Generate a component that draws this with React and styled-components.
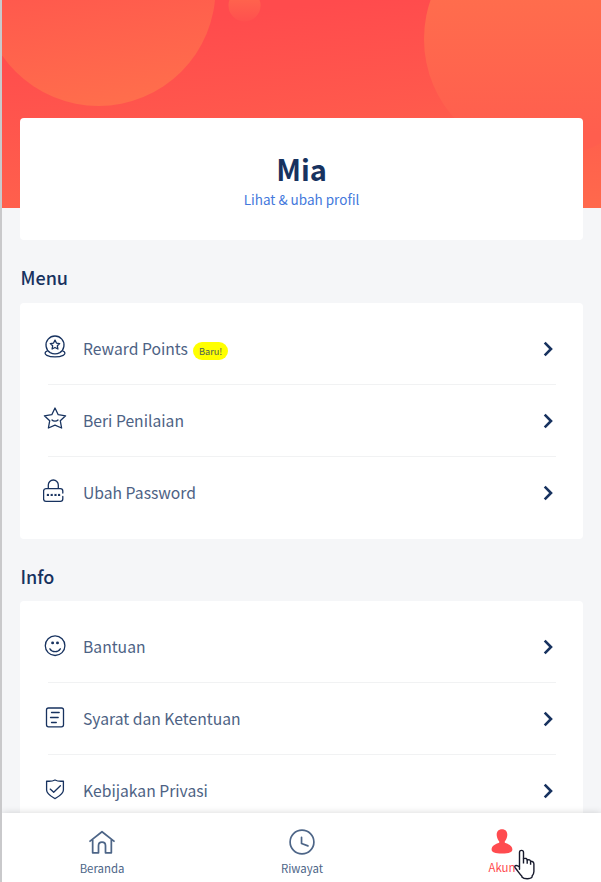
import React from "react";
import styled, { createGlobalStyle } from "styled-components";

const GlobalStyle = createGlobalStyle`
  *, *::before, *::after { box-sizing: border-box; }
  body {
    margin: 0;
    background: #c9c9cb;
    font-family: "Source Sans Pro", "Noto Sans CJK SC", sans-serif;
    color: #17325f;
    overflow: hidden;
  }
`;

const Screen = styled.div`
  display: flex;
  flex-direction: column;
  height: 882px;
  margin-left: 2px;
  background: #f5f6f8;
  overflow: hidden;
`;

const Content = styled.main`
  flex: 1;
  min-height: 0;
  overflow: hidden;
`;

const Banner = styled.header`
  height: 208px;
  background: linear-gradient(173deg, #ff4b4d 15%, #ff694c 100%);

  svg { display: block; }
`;

const Card = styled.section`
  margin: 0 18px;
  background: #fff;
  border-radius: 4px;
`;

const ProfileCard = styled(Card)`
  position: relative;
  display: flex;
  flex-direction: column;
  align-items: center;
  height: 122px;
  margin-top: -90px;
  padding-top: 30px;
`;

const Name = styled.h1`
  margin: 0 0 1px;
  font-size: 29px;
  line-height: 40px;
  font-weight: 700;
`;

const ProfileLink = styled.a`
  font-size: 13.5px;
  line-height: 20px;
  color: #4479dc;
`;

const SectionTitle = styled.h2`
  margin: 24px 0 ${(p) => p.$bottom}px 18.5px;
  font-size: 18px;
  line-height: 26px;
  font-weight: 500;
`;

const MenuList = styled(Card)`
  padding: 10px 27px 10px 28px;
`;

const MenuRow = styled.div`
  display: flex;
  align-items: center;
  height: 72px;
  border-bottom: 1px solid ${(p) => (p.$last ? "transparent" : "#f1f2f3")};

  > svg:first-child {
    flex: none;
    margin: -4px 16px 0 -5px;
  }
  > svg:last-child {
    flex: none;
    margin-left: auto;
    margin-right: 3px;
  }
`;

const Label = styled.span`
  font-size: 15.7px;
  line-height: 24px;
  color: #4d6284;
`;

const Badge = styled.span`
  height: 18px;
  margin: 4px 0 0 5px;
  padding: 0 6px;
  border-radius: 9px;
  background: #ffff00;
  color: #4d6254;
  font-size: 9.2px;
  line-height: 18px;
`;

const NavBar = styled.nav`
  position: relative;
  display: grid;
  grid-template-columns: repeat(3, 200px);
  flex: none;
  height: 69px;
  background: #fff;
  box-shadow: 0 0 7px rgba(0, 0, 0, 0.16);
`;

const NavItem = styled.a`
  display: flex;
  flex-direction: column;
  align-items: center;
  padding-top: 15px;
  color: ${(p) => (p.$active ? "#ff4b4f" : "#4d6587")};
  font-size: 11.4px;
  line-height: 18px;

  svg { display: block; flex: none; margin-bottom: ${(p) => (p.$active ? 2 : 3)}px; }
`;

const Pointer = styled.svg`
  position: absolute;
  left: 510px;
  top: 36px;
`;

function BannerArt() {
  return (
    <svg width="599" height="208" viewBox="2 0 599 208">
      <defs>
        <linearGradient id="bubbleLeft" x1="0.45" y1="0.45" x2="0.55" y2="1">
          <stop offset="0" stopColor="#ff584d" />
          <stop offset="1" stopColor="#ff6e4c" />
        </linearGradient>
        <linearGradient id="bubbleSmall" x1="0" y1="0" x2="0" y2="1">
          <stop offset="0.2" stopColor="#ff664d" />
          <stop offset="1" stopColor="#ff504e" />
        </linearGradient>
        <linearGradient id="bubbleRight" x1="0.5" y1="0.32" x2="0.5" y2="0.9">
          <stop offset="0" stopColor="#ff6d4d" />
          <stop offset="1" stopColor="#ff5e4e" />
        </linearGradient>
      </defs>
      <circle cx="98.5" cy="-11" r="117" fill="url(#bubbleLeft)" />
      <circle cx="244.5" cy="5.5" r="16" fill="url(#bubbleSmall)" />
      <circle cx="543" cy="39" r="119" fill="url(#bubbleRight)" />
    </svg>
  );
}

function LineIcon({ children, width = 1.3, size = 24 }) {
  return (
    <svg
      width={size}
      height={size}
      viewBox="0 0 24 24"
      fill="none"
      stroke="currentColor"
      strokeWidth={width}
      strokeLinecap="round"
      strokeLinejoin="round"
    >
      {children}
    </svg>
  );
}

const RewardIcon = () => (
  <LineIcon>
    <path d="M7.2 17.6a9 9 0 1 1 9.6 0c-2.7 1.4-6.9 1.4-9.6 0Z" />
    <path d="m12 5.1 1.45 2.95 3.25.47-2.35 2.3.55 3.23-2.9-1.53-2.9 1.53.55-3.23-2.35-2.3 3.25-.47Z" />
    <path d="M4.3 15.9c-3 1.2-2.8 3.3-.5 4.4 4.2 2.2 12.2 2.2 16.4 0 2.3-1.1 2.5-3.2-.5-4.4" />
  </LineIcon>
);

const StarIcon = () => (
  <LineIcon>
    <path d="m12 1 3.2 6.7 7.4 1.1-5.3 5 1.3 7.2-6.6-2.8L5.4 21l1.3-7.2-5.3-5 7.4-1.1Z" />
    <path d="M9 13c1.4 1.6 4.6 1.6 6 0" />
  </LineIcon>
);

const LockIcon = () => (
  <LineIcon>
    <path d="M5.3 9.4V6a5 5 0 0 1 10 0v3.4M19.8 14v-2a2.4 2.4 0 0 0-2.4-2.4H2.9A2.4 2.4 0 0 0 .6 12v8A2.4 2.4 0 0 0 3 22.4h14.4a2.4 2.4 0 0 0 2.4-2.4v-2.5" />
    <path strokeWidth="1.1" d="m4.3 15.3 1.2 1.2m0-1.2-1.2 1.2m3.8-1.2 1.2 1.2m0-1.2-1.2 1.2m3.8-1.2 1.2 1.2m0-1.2-1.2 1.2m3.6-1.2 1.2 1.2m0-1.2-1.2 1.2" />
  </LineIcon>
);

const SmileIcon = () => (
  <LineIcon>
    <circle cx="12.1" cy="12.7" r="9.8" />
    <path d="M6.9 15.8c2.3 3.8 8.1 3.8 10.4 0" />
    <ellipse cx="9.6" cy="9.9" rx=".8" ry=".7" fill="currentColor" />
    <ellipse cx="14.5" cy="9.9" rx=".8" ry=".7" fill="currentColor" />
  </LineIcon>
);

const DocumentIcon = () => (
  <LineIcon>
    <rect x="3.5" y="3" width="17" height="18.8" rx="2" />
    <path d="M8.5 7.5h7.7M7.5 12.5h7.7M8.5 17.5h4.8" />
  </LineIcon>
);

const ShieldIcon = () => (
  <LineIcon>
    <path d="M12 3c2 1 5 1.5 8.4 1.1v9c0 4.1-4.6 6.3-8.4 8.5-3.8-2.2-8.4-4.4-8.4-8.5v-9C7 4.5 10 4 12 3Z" />
    <path d="m7.2 12.1 3.5 3.2 6.7-6.6" />
  </LineIcon>
);

const Chevron = () => (
  <svg width="10" height="16" viewBox="0 0 10 16" fill="none" stroke="currentColor" strokeWidth="2.6">
    <path d="m1.7 1.7 6.3 6.3-6.3 6.3" />
  </svg>
);

const HomeIcon = () => (
  <LineIcon size={28} width={1.5}>
    <path strokeLinecap="square" d="M1.8 11.2 12 3.2l10.2 8M4 10v11.3h5v-6.1c0-4 6-4 6 0v6.1h5V10" />
  </LineIcon>
);

const ClockIcon = () => (
  <LineIcon size={28} width={1.45}>
    <circle cx="12" cy="12" r="10.2" />
    <path d="M11.6 8v5.3l5.5 2" />
  </LineIcon>
);

const PersonIcon = () => (
  <svg width="28" height="28" viewBox="0 0 28 28" fill="currentColor">
    <path d="M14 1.2c-4 0-6 3-5.1 7.3.4 2.2 1.3 3.8 2.3 4.8v1.5c-3.7 1.2-7.6 3.2-7.6 6.7 0 2.5 3.3 4.1 10.4 4.1s10.4-1.6 10.4-4.1c0-3.5-3.9-5.5-7.6-6.7v-1.5c1-1 1.9-2.6 2.3-4.8C20 4.2 18 1.2 14 1.2Z" />
  </svg>
);

const HandPointer = () => (
  <Pointer width="24" height="32" viewBox="0 0 24 32">
    <path
      d="M7.5 20.2V3.4c0-2.7 4-2.7 4 0v6.3c2-.8 3.4-.1 3.7 1.2 1.8-.6 3.1.1 3.4 1.4 2-.2 3.3.8 3.3 2.7v7.4c0 2.1-.8 3.3-1.8 4.6v1c-1.5 2.4-8.2 2.4-10.2 0v-.8c-2.2-2-3.8-5-6.2-7.7C1.4 16.8 3.9 15.1 7.5 18Z"
      fill="#fff"
      stroke="#171a2c"
      strokeWidth="1.4"
      strokeLinejoin="round"
    />
    <path d="M11.5 9.5v5m3.7-3.8v4m3.4-2.5v3.5" fill="none" stroke="#171a2c" strokeWidth="1.4" />
  </Pointer>
);

function MenuItem({ icon: Icon, label, badge, last }) {
  return (
    <MenuRow $last={last}>
      <Icon />
      <Label>{label}</Label>
      {badge && <Badge>{badge}</Badge>}
      <Chevron />
    </MenuRow>
  );
}

export default function App() {
  return (
    <>
      <GlobalStyle />
      <Screen>
        <Content>
          <Banner>
            <BannerArt />
          </Banner>
          <ProfileCard>
            <Name>Mia</Name>
            <ProfileLink>Lihat &amp; ubah profil</ProfileLink>
          </ProfileCard>
          <SectionTitle $bottom={13}>Menu</SectionTitle>
          <MenuList>
            <MenuItem icon={RewardIcon} label="Reward Points" badge="Baru!" />
            <MenuItem icon={StarIcon} label="Beri Penilaian" />
            <MenuItem icon={LockIcon} label="Ubah Password" last />
          </MenuList>
          <SectionTitle $bottom={12}>Info</SectionTitle>
          <MenuList>
            <MenuItem icon={SmileIcon} label="Bantuan" />
            <MenuItem icon={DocumentIcon} label="Syarat dan Ketentuan" />
            <MenuItem icon={ShieldIcon} label="Kebijakan Privasi" last />
          </MenuList>
        </Content>
        <NavBar>
          <NavItem>
            <HomeIcon />
            Beranda
          </NavItem>
          <NavItem>
            <ClockIcon />
            Riwayat
          </NavItem>
          <NavItem $active>
            <PersonIcon />
            Akun
          </NavItem>
          <HandPointer />
        </NavBar>
      </Screen>
    </>
  );
}
